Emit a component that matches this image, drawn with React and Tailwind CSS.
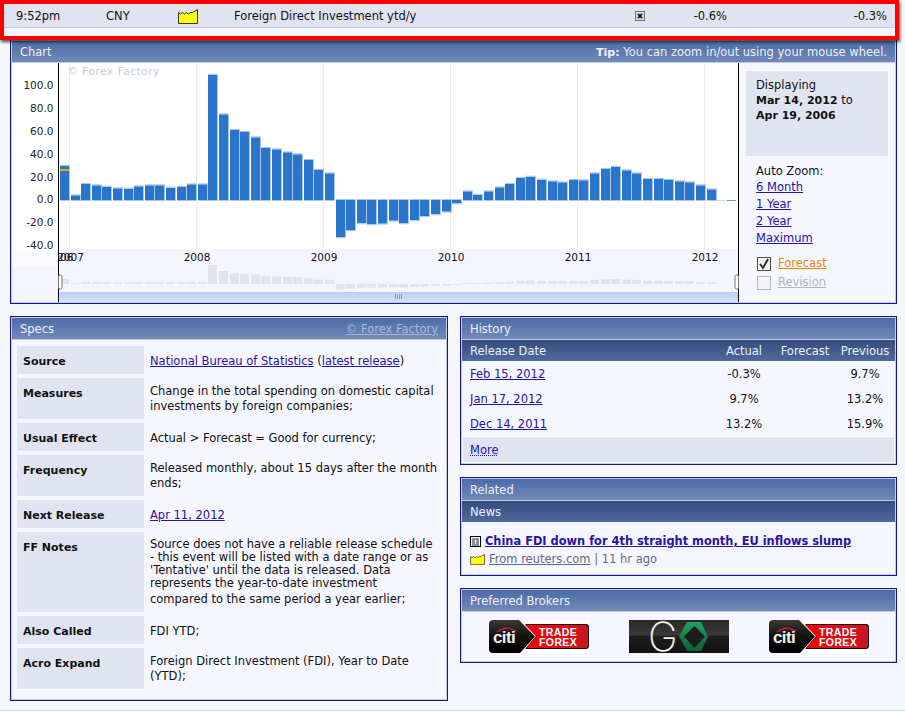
import React from 'react';

const vals = [34, 4.7, 16, 14.7, 13.3, 11.7, 11.3, 13.7, 14.7, 14.7, 12.3, 13, 15.7, 15.7, 125.3, 85.7, 70, 68, 62.7, 52, 50.7, 47.7, 45.7, 40, 30, 26.7, -37.3, -30, -23.3, -24.3, -23.7, -20.7, -23.3, -20.3, -16, -14.3, -11.7, -3.3, 8.7, 5.3, 8.7, 12.7, 16, 22, 23.3, 20.3, 18.7, 17.7, 20, 19.7, 26.7, 31, 33.3, 29.7, 26.7, 21, 21, 20, 18.7, 17.7, 14.7, 10.7];
const yLabels = ['100.0', '80.0', '60.0', '40.0', '20.0', '0.0', '-20.0', '-40.0'];
const yPos = [89, 112, 135, 158, 181, 203, 226, 249];
const years = [[197, '2008'], [324, '2009'], [451, '2010'], [578, '2011'], [705, '2012']];
const gridX = [69.5, 196.5, 323.5, 450.5, 577.5, 704.5];

const Chart = () => (
  <svg viewBox="12 63 727 239" width="727" height="239" className="block shrink-0" fontFamily="'DejaVu Sans', sans-serif" fontSize="10.5">
    <defs>
      <clipPath id="plotClip"><rect x="58" y="63" width="681" height="239" /></clipPath>
      <linearGradient id="scrollBg" x1="0" y1="0" x2="0" y2="1">
        <stop offset="0" stopColor="#bccdf6" />
        <stop offset="1" stopColor="#d6e1fb" />
      </linearGradient>
    </defs>
    <rect x="12" y="63" width="727" height="239" fill="#ffffff" />
    <rect x="12" y="249" width="727" height="53" fill="#f4f5fe" />
    <rect x="12" y="249" width="46" height="17" fill="#fbfbff" />
    {gridX.map((x) => <line key={x} x1={x} x2={x} y1="63" y2="249" stroke="#ebedf2" />)}
    <text x="67" y="75" fill="#c6ccdf" fontSize="11" letterSpacing="0.3">© Forex Factory</text>
    {yLabels.map((t, i) => <text key={t} x="53.5" y={yPos[i]} textAnchor="end" fill="#222">{t}</text>)}
    {vals.map((v, i) => {
      const x = Math.round(60 + i * 10.6);
      const top = v > 0 ? 200 - v : 200;
      const h = Math.abs(v);
      return (
        <g key={i}>
          <rect x={x} y={top} width="9" height={h} fill="#2a75cc" />
          <rect x={x + 9} y={top} width="1" height={h} fill="#a8c7eb" />
          <rect x={x} y={v > 0 ? top - 1 : top + h} width="10" height="1" fill="#a8c7eb" />
          <rect x={x} y={v > 0 ? 200 : 199} width="10" height="1" fill="#a8c7eb" />
        </g>
      );
    })}
    <rect x="60" y="169" width="9" height="2" fill="#f0a500" />
    <rect x="717" y="200" width="9" height="1" fill="#c9dcf3" />
    <rect x="727" y="200" width="9" height="1" fill="#5c9ae0" />
    <g clipPath="url(#plotClip)">
      <text x="60" y="261" textAnchor="middle" fill="#111">2006</text>
      <text x="70.5" y="261" textAnchor="middle" fill="#111">2007</text>
    </g>
    {years.map(([x, t]) => <text key={t} x={x} y="261" textAnchor="middle" fill="#111">{t}</text>)}
    {vals.map((v, i) => {
      const x = Math.round(60 + i * 10.6);
      const h = Math.abs(v) * 0.152;
      const top = v > 0 ? 284 - h : 284;
      return <rect key={i} x={x} y={top} width="9" height={Math.max(h, 1)} fill="#e0e4f1" />;
    })}
    <rect x="58" y="292" width="680" height="10" fill="url(#scrollBg)" />
    <g stroke="#8a9cc4">
      <line x1="395.5" x2="395.5" y1="294" y2="299" />
      <line x1="397.5" x2="397.5" y1="294" y2="299" />
      <line x1="399.5" x2="399.5" y1="294" y2="299" />
      <line x1="401.5" x2="401.5" y1="294" y2="299" />
    </g>
    <line x1="58.5" x2="58.5" y1="63" y2="302" stroke="#000" />
    <line x1="738.5" x2="738.5" y1="63" y2="302" stroke="#000" />
    <rect x="58.5" y="275" width="3.5" height="14" rx="1.5" fill="#fff" stroke="#777" />
    <rect x="735" y="275" width="3.5" height="14" rx="1.5" fill="#fff" stroke="#777" />
  </svg>
);

const ImpactIcon = ({ w = 20, h = 15 }) => (
  <svg width={w} height={h} viewBox="0 0 20 15" className="block">
    <path d="M0.5 14.5V3.5L2.5 5L4.5 3.5L6.5 5L8.5 3.5L10.5 5L12.5 3.5L14.5 3.5L19.5 0.5V14.5Z" fill="#ffff00" stroke="#333" />
  </svg>
);

const Panel = ({ title, right, className = '', children }) => (
  <div className={`border border-[#15158c] ${className}`}>
    <div className="border border-[#c5cbe0] h-full flex flex-col">
      <div className="h-[22px] shrink-0 flex items-center justify-between px-[8px] pt-px border-b border-[#c5cbe0] text-[#eef1fa] bg-gradient-to-b from-[#4c6ba6] to-[#7289b9]">
        <span>{title}</span>
        {right}
      </div>
      {children}
    </div>
  </div>
);

const A = ({ children, className = '' }) => <a href="#" className={`text-[#2a12a8] underline ${className}`}>{children}</a>;

const B = ({ children }) => <b className="text-[11px]">{children}</b>;

const specs = [
  ['Source', 'h-[28px]', <span className="block pt-[8px]"><A>National Bureau of Statistics</A> (<A>latest release</A>)</span>],
  ['Measures', 'h-[41px]', <span className="block pt-[6px] w-[290px]">Change in the total spending on domestic capital investments by foreign companies;</span>],
  ['Usual Effect', 'h-[28px]', <span className="block pt-[8px]">Actual &gt; Forecast = Good for currency;</span>],
  ['Frequency', 'h-[41px]', <span className="block pt-[6px] w-[290px]">Released monthly, about 15 days after the month ends;</span>],
  ['Next Release', 'h-[28px]', <span className="block pt-[8px]"><A>Apr 11, 2012</A></span>],
  ['FF Notes', 'h-[80px]', (
    <span className="block pt-[6px]">
      <span className="block leading-[13px] whitespace-nowrap">Source does not have a reliable release schedule<br />- this event will be listed with a date range or as<br />'Tentative' until the data is released. Data<br />represents the year-to-date investment</span>
      <span className="block mt-[2px] whitespace-nowrap">compared to the same period a year earlier;</span>
    </span>
  )],
  ['Also Called', 'h-[28px]', <span className="block pt-[8px]">FDI YTD;</span>],
  ['Acro Expand', 'h-[41px]', <span className="block pt-[6px] w-[290px]">Foreign Direct Investment (FDI), Year to Date (YTD);</span>],
];

const history = [
  ['Feb 15, 2012', '-0.3%', '9.7%'],
  ['Jan 17, 2012', '9.7%', '13.2%'],
  ['Dec 14, 2011', '13.2%', '15.9%'],
];

const SubHeader = ({ children }) => (
  <div className="h-[21px] shrink-0 text-[#eef1fa] bg-gradient-to-b from-[#344d7f] to-[#506a9e]">{children}</div>
);

const CitiLogo = () => (
  <svg width="100" height="33" viewBox="0 0 100 33" className="block bg-white" fontFamily="'Liberation Sans', sans-serif">
    <defs>
      <linearGradient id="citiBlack" x1="0" y1="0" x2="0" y2="1">
        <stop offset="0" stopColor="#3a3a3a" />
        <stop offset="0.5" stopColor="#111" />
        <stop offset="1" stopColor="#000" />
      </linearGradient>
      <linearGradient id="citiRed" x1="0" y1="0" x2="1" y2="0">
        <stop offset="0" stopColor="#ff0000" />
        <stop offset="1" stopColor="#c9161f" />
      </linearGradient>
    </defs>
    <path d="M36 4H97Q100 4 100 7V26Q100 29 97 29H36L47 16Z" fill="#111" />
    <path d="M36 5H96Q99 5 99 8V25Q99 28 96 28H37L47.5 16.5Z" fill="url(#citiRed)" />
    <path d="M4 0H30L46 16.5L31 33H4Q0 33 0 29V4Q0 0 4 0Z" fill="url(#citiBlack)" />
    <text x="4" y="23" fontSize="17" fontWeight="700" fill="#f0f0f0" letterSpacing="-0.6">citi</text>
    <path d="M8 12Q16 5 27 11" fill="none" stroke="#e0141c" strokeWidth="1.3" />
    <text x="50" y="15.5" fontSize="10.5" fontWeight="700" fill="#fff" letterSpacing="0.4">TRADE</text>
    <text x="50" y="25.5" fontSize="10.5" fontWeight="700" fill="#fff" letterSpacing="0.4">FOREX</text>
  </svg>
);

const GoLogo = () => (
  <svg width="100" height="33" viewBox="0 0 100 33" className="block">
    <defs>
      <linearGradient id="goBg" x1="0" y1="0" x2="0" y2="1">
        <stop offset="0" stopColor="#272727" />
        <stop offset="0.45" stopColor="#3a3a3a" />
        <stop offset="0.5" stopColor="#1e1e1e" />
        <stop offset="1" stopColor="#111" />
      </linearGradient>
      <linearGradient id="goGreen" x1="0" y1="0" x2="0" y2="1">
        <stop offset="0" stopColor="#1fa35c" />
        <stop offset="1" stopColor="#0e5c36" />
      </linearGradient>
    </defs>
    <rect width="100" height="33" fill="url(#goBg)" />
    <text x="19" y="31" fontFamily="Inter, sans-serif" fontWeight="200" fontSize="40" fill="#f0f0f0">G</text>
    <path d="M58 2H72L79 16.5L72 31H58L50 16.5Z" fill="url(#goGreen)" />
    <path d="M65.5 6L76 16.5L65.5 28L55 16.5Z" fill="#1c1c1c" />
  </svg>
);

const App = () => (
  <div className="relative w-[905px] h-[712px] overflow-hidden bg-[#f5f6fe] text-[11.5px] leading-[15px] text-[#111] font-['DejaVu_Sans',sans-serif]">
    <div className="absolute left-0 top-0 w-[899px] h-[40px] border-4 border-[#ff0000] bg-[#f4f5fd] shadow-[1px_2px_3px_rgba(0,0,0,0.7)] z-10">
      <div className="h-[24px] pt-px flex items-center bg-[#e0e4f1] border-b border-[#c6cadf] relative">
        <span className="w-[90px] ml-[12px] shrink-0">9:52pm</span>
        <span className="w-[72px] shrink-0">CNY</span>
        <span className="w-[56px] shrink-0"><ImpactIcon /></span>
        <span className="w-[401px] shrink-0">Foreign Direct Investment ytd/y</span>
        <span className="w-[10px] shrink-0">
          <svg width="10" height="10" viewBox="0 0 10 10" className="block">
            <rect x="0.5" y="0.5" width="9" height="9" fill="#d4d4d4" stroke="#777" />
            <path d="M3 3L7 7M7 3L3 7" stroke="#000" strokeWidth="1.6" />
          </svg>
        </span>
        <span className="w-[82px] text-right shrink-0">-0.6%</span>
        <span className="w-[160px] text-right shrink-0">-0.3%</span>
      </div>
    </div>

    <div className="ml-[10px] pt-[39px] w-[887px]">
      <Panel
        title="Chart"
        className="h-[265px]"
        right={<span><B>Tip:</B> You can zoom in/out using your mouse wheel.</span>}
      >
        <div className="flex flex-1 min-h-0">
          <Chart />
          <div className="flex-1 pt-[8px] pl-[7px]">
            <div className="w-[142px] h-[85px] bg-[#e0e4f1] px-[10px] pt-[7px]">
              <div>Displaying</div>
              <div><B>Mar 14, 2012</B> to</div>
              <div><B>Apr 19, 2006</B></div>
            </div>
            <div className="pl-[10px] pt-[8px]">
              <div>Auto Zoom:</div>
              <div className="flex flex-col items-start leading-[17px]">
                <A>6 Month</A>
                <A>1 Year</A>
                <A>2 Year</A>
                <A>Maximum</A>
              </div>
              <div className="flex items-center gap-[7px] mt-[9px] ml-px">
                <span className="w-[14px] h-[14px] border border-[#555] bg-[#f4f4f4] flex items-center justify-center">
                  <svg width="12" height="12" viewBox="0 0 12 12"><path d="M2 6L5 10L10 1" fill="none" stroke="#333" strokeWidth="2" /></svg>
                </span>
                <a href="#" className="text-[#e8860c] underline">Forecast</a>
              </div>
              <div className="flex items-center gap-[7px] mt-[4px] ml-px">
                <span className="w-[14px] h-[14px] border border-[#b5b8c4] bg-[#f4f4f6]"></span>
                <a href="#" className="text-[#aeb5c6] underline">Revision</a>
              </div>
            </div>
          </div>
        </div>
      </Panel>

      <div className="flex gap-[12px] mt-[12px] items-start">
        <Panel
          title="Specs"
          className="w-[438px] h-[385px]"
          right={<a href="#" className="text-[#a8b9dc] underline">© Forex Factory</a>}
        >
          <div className="pt-[6px] pl-[5px] flex flex-col gap-[4px]">
            {specs.map(([label, height, value]) => (
              <div key={label} className={`grid grid-cols-[127px_1fr] gap-x-[6px] ${height}`}>
                <div className="bg-[#e0e4f1] pl-[6px] pt-[8px] font-bold text-[11px]">{label}</div>
                <div>{value}</div>
              </div>
            ))}
          </div>
        </Panel>

        <div className="w-[437px] flex flex-col gap-[12px]">
          <Panel title="History" className="h-[149px]">
            <SubHeader>
              <div className="grid grid-cols-[244px_60px_62px_58px] pl-[8px] leading-[22px]">
                <span>Release Date</span>
                <span className="text-center">Actual</span>
                <span className="text-center">Forecast</span>
                <span className="text-center">Previous</span>
              </div>
            </SubHeader>
            <div className="flex flex-col">
              {history.map(([date, actual, prev]) => (
                <div key={date} className="grid grid-cols-[244px_60px_62px_58px] pl-[8px] pt-[2px] h-[25px] items-center">
                  <span><A>{date}</A></span>
                  <span className="text-center">{actual}</span>
                  <span></span>
                  <span className="text-center">{prev}</span>
                </div>
              ))}
            </div>
            <div className="flex-1 border border-white bg-[#e0e4f1] px-[7px] pt-[6px]">
              <a href="#" className="text-[#2a12a8] underline decoration-dotted">More</a>
            </div>
          </Panel>

          <Panel title="Related" className="h-[99px]">
            <SubHeader><div className="pl-[8px] leading-[22px]">News</div></SubHeader>
            <div className="pl-[8px] pt-[12px]">
              <div className="flex items-center gap-[4px]">
                <svg width="11" height="11" viewBox="0 0 11 11" className="block shrink-0">
                  <rect x="0.5" y="0.5" width="10" height="10" fill="#fff" stroke="#000" />
                  <path d="M2 3H9M2 5H5M6 5H9M2 7H5M6 7H9M2 9H9" stroke="#222" />
                </svg>
                <a href="#" className="text-[#2a12a8] underline font-bold text-[11.4px]">China FDI down for 4th straight month, EU inflows slump</a>
              </div>
              <div className="flex items-center gap-[4px] mt-[3px] text-[#666a84]">
                <ImpactIcon w={15} h={11} />
                <span><a href="#" className="text-[#666a84] underline">From reuters.com</a> | 11 hr ago</span>
              </div>
            </div>
          </Panel>

          <Panel title="Preferred Brokers" className="h-[75px]">
            <div className="flex gap-[40px] pl-[27px] pt-[8px]">
              <CitiLogo />
              <GoLogo />
              <CitiLogo />
            </div>
          </Panel>
        </div>
      </div>
    </div>

    <div className="absolute left-0 bottom-[1px] w-full h-px bg-[#d8dbe8]"></div>
  </div>
);

export default App;
